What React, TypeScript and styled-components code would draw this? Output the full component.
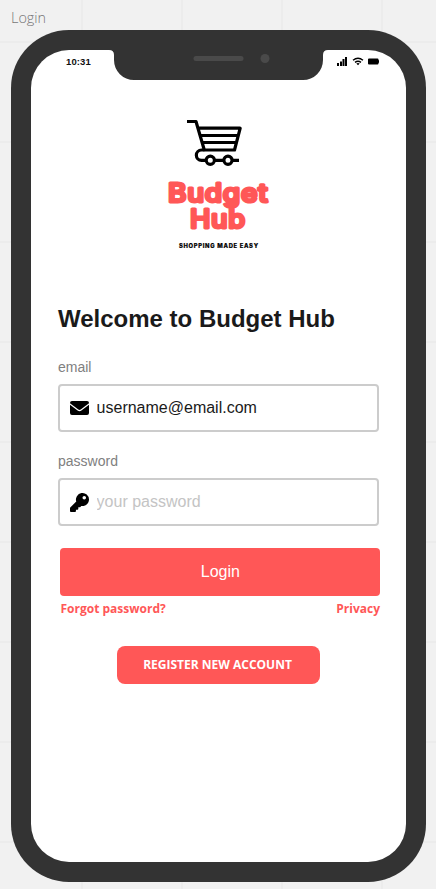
import React from 'react';
import styled, { createGlobalStyle } from 'styled-components';

const CORAL = '#ff5757';
const SANS = '"Liberation Sans", Arial, sans-serif';
const OPEN = '"Open Sans", sans-serif';

const GlobalStyle = createGlobalStyle`
  *, *::before, *::after { box-sizing: border-box; }
  body { margin: 0; background: #f1f1f1; overflow: hidden; }
  button, input { font: inherit; margin: 0; }
`;

const Canvas = styled.main`
  width: 436px;
  height: 889px;
  padding: 0 10px 0 11px;
  overflow: hidden;
  background-color: #f1f1f1;
  background-image: linear-gradient(90deg, #ececec 2px, transparent 2px),
    linear-gradient(#ececec 2px, transparent 2px);
  background-size: 100px 100px;
  background-position: 81px 41px;
`;

const FrameLabel = styled.div`
  height: 29.5px;
  padding-top: 8px;
  font: 300 14.4px/20px ${OPEN};
  color: #777;
`;

const Phone = styled.section`
  width: 415px;
  height: 852px;
  padding: 20px;
  border-radius: 58px;
  background: #333;
`;

const Screen = styled.div`
  position: relative;
  width: 375px;
  height: 812px;
  border-radius: 38px;
  background: #fff;
  overflow: hidden;
`;

const Notch = styled.svg`
  position: absolute;
  left: 78px;
  top: 0;
  display: block;
`;

const StatusBar = styled.div`
  display: flex;
  justify-content: space-between;
  height: 30px;
  padding: 6.5px 27px 0 35px;
`;

const Clock = styled.time`
  font: bold 9.5px/11px ${SANS};
  letter-spacing: 0.1px;
  color: #111;
`;

const StatusIcons = styled.svg`
  display: block;
`;

const Logo = styled.svg`
  display: block;
  margin: 30.5px 0 0 124px;
`;

const Form = styled.form`
  width: 323px;
  margin: 53px 0 0 27px;
  display: flex;
  flex-direction: column;
`;

const Title = styled.h1`
  margin: 0 0 24px;
  font: bold 24px/32px ${SANS};
  color: #1a1a1a;
  white-space: nowrap;
`;

const FieldLabel = styled.label`
  font: 14px/16px ${SANS};
  color: #808080;
  margin-bottom: 9px;
`;

const Field = styled.div`
  display: flex;
  align-items: center;
  gap: 7.6px;
  width: 320.5px;
  height: 48px;
  padding: 0 10px;
  margin-bottom: 21px;
  border: 2px solid #ccc;
  border-radius: 4px;
`;

const FieldInput = styled.input`
  flex: 1;
  min-width: 0;
  padding: 0;
  border: 0;
  outline: 0;
  background: transparent;
  font: 16px/20px ${SANS};
  color: #1a1a1a;
  &::placeholder { color: #c4c4c4; opacity: 1; }
`;

const LoginButton = styled.button`
  width: 320px;
  height: 48px;
  margin: 1px 0 0 2.4px;
  padding: 0;
  border: 0;
  border-radius: 4px;
  background: ${CORAL};
  color: #fff;
  font: 16px/20px ${SANS};
`;

const Links = styled.div`
  display: flex;
  justify-content: space-between;
  margin: 4px 1px 0 2.5px;
  font: bold 12px/17px ${OPEN};
`;

const TextLink = styled.a`
  color: ${CORAL};
`;

const RegisterButton = styled.button`
  align-self: flex-start;
  width: 203px;
  height: 37.5px;
  margin: 29px 0 0 59px;
  padding: 0 2px 0 0;
  border: 0;
  border-radius: 8px;
  background: ${CORAL};
  color: #fff;
  font: bold 12px/17px ${OPEN};
`;

const EnvelopeIcon = () => (
  <svg width="19" height="14" viewBox="0 0 19 14">
    <path d="M2 0h15q2 0 2 2v.3L10.7 8.6q-1.2.9-2.4 0L0 2.300V2Q0 0 2 0Z" />
    <path d="M0 3.800 7.600 9.500q1.900 1.400 3.800 0L19 3.800V12q0 2-2 2H2q-2 0-2-2Z" />
  </svg>
);

const KeyIcon = () => (
  <svg width="19" height="19" viewBox="0 0 512 512">
    <path d="M512 176c0 97-79 176-176 176-11 0-22-1-32.700-3l-24 27a24 24 0 0 1-18 8H224v40a24 24 0 0 1-24 24h-40v40a24 24 0 0 1-24 24H24a24 24 0 0 1-24-24v-78c0-6.400 2.500-12.500 7-17l161.800-161.800A176 176 0 1 1 512 176ZM336 128a48 48 0 1 0 96 0 48 48 0 1 0-96 0Z" />
  </svg>
);

const BudgetHubLogo = () => (
  <Logo width="127" height="140" viewBox="155 110 127 140" role="img" aria-label="Budget Hub">
    <g fill="none" stroke="#000" strokeWidth="3.200" strokeLinejoin="round">
      <path d="M187 121.500H196L204.300 150H234.500L240.200 128.200H198.500" />
      <path d="M200.500 135.500H238M202.500 142.500H236M204.300 150H201.500a4.900 4.900 0 0 0 0 10.300H239" />
      <circle cx="210.300" cy="160.300" r="4.100" fill="#fff" />
      <circle cx="228" cy="160.300" r="4.100" fill="#fff" />
    </g>
    <g
      fill={CORAL}
      stroke={CORAL}
      strokeWidth="3"
      strokeLinejoin="round"
      strokeLinecap="round"
      fontFamily="Inter, sans-serif"
      fontWeight="500"
      fontSize="25.500"
    >
      <text x="168" y="201.500" textLength="100.500" lengthAdjust="spacingAndGlyphs" letterSpacing="0.700">Budget</text>
      <text x="190" y="228.200" textLength="56" lengthAdjust="spacingAndGlyphs" letterSpacing="0.700">Hub</text>
    </g>
    <text
      x="179"
      y="248"
      textLength="79"
      fontFamily="Inter, sans-serif"
      fontWeight="800"
      fontSize="5.800"
      stroke="#000"
      strokeWidth="0.200"
    >
      SHOPPING MADE EASY
    </text>
  </Logo>
);

export default function App() {
  return (
    <>
      <GlobalStyle />
      <Canvas>
        <FrameLabel>Login</FrameLabel>
        <Phone>
          <Screen>
            <Notch width="220" height="31" viewBox="0 0 220 31">
              <path d="M0 0H219Q214 0 214 5V10A20 20 0 0 1 194 30H25A20 20 0 0 1 5 10V5Q5 0 0 0Z" fill="#333" />
              <rect x="84.500" y="6" width="50" height="5" rx="2.500" fill="#4a4a4a" />
              <circle cx="156" cy="8.500" r="4.500" fill="#4a4a4a" />
            </Notch>
            <StatusBar>
              <Clock>10:31</Clock>
              <StatusIcons width="43" height="11" viewBox="0 0 43 11">
                <path d="M1 7h2v3H1zM4 5.500h2V10H4zM6.500 3h2v7h-2zM9 1h2v9H9z" />
                <g fill="none" stroke="#000" strokeWidth="1.400">
                  <path d="M17 4.200q5-4 10 0M19 6.400q3-2.200 6 0" />
                </g>
                <path d="M20.300 7.600q1.700-1.200 3.400 0L22 9.300z" />
                <path d="M33 2.500h8.500q1 0 1 1v.7h.8v2.600h-.8v.7q0 1-1 1H33q-1 0-1-1v-4q0-1 1-1Z" />
              </StatusIcons>
            </StatusBar>
            <BudgetHubLogo />
            <Form onSubmit={(e) => e.preventDefault()}>
              <Title>Welcome to Budget Hub</Title>
              <FieldLabel htmlFor="email">email</FieldLabel>
              <Field>
                <EnvelopeIcon />
                <FieldInput id="email" defaultValue="username@email.com" />
              </Field>
              <FieldLabel htmlFor="password">password</FieldLabel>
              <Field>
                <KeyIcon />
                <FieldInput id="password" type="password" placeholder="your password" />
              </Field>
              <LoginButton>Login</LoginButton>
              <Links>
                <TextLink>Forgot password?</TextLink>
                <TextLink>Privacy</TextLink>
              </Links>
              <RegisterButton type="button">REGISTER NEW ACCOUNT</RegisterButton>
            </Form>
          </Screen>
        </Phone>
      </Canvas>
    </>
  );
}
